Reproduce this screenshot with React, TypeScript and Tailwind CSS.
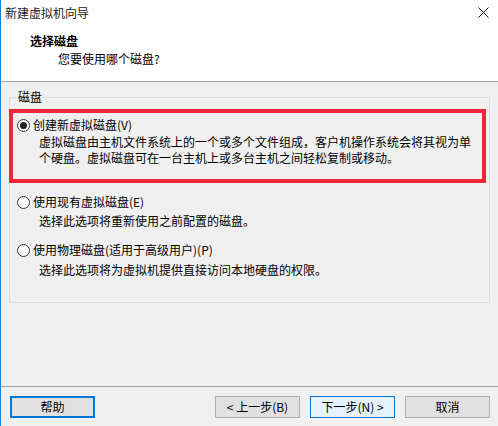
import React from "react";

function Radio({ checked }: { checked?: boolean }) {
  return (
    <span className="flex h-[13px] w-[13px] shrink-0 items-center justify-center rounded-full border border-[#333333] bg-white">
      {checked && <span className="h-[7px] w-[7px] rounded-full bg-[#222222]" />}
    </span>
  );
}

function Btn({ children, variant }: { children: React.ReactNode; variant?: "focus" | "default" }) {
  const cls =
    variant === "focus"
      ? "border-2 border-[#0078d7] bg-[#e1e1e1]"
      : variant === "default"
      ? "border border-[#0078d7] bg-[#e5f1fb]"
      : "border border-[#adadad] bg-[#e1e1e1]";
  return (
    <div className={`flex h-[22px] w-[85px] items-center justify-center text-[12px] leading-[16px] text-black ${cls}`}>
      {children}
    </div>
  );
}

export default function App() {
  return (
    <div className="relative flex h-[426px] w-[498px] flex-col overflow-hidden border-l border-[#1883d7] bg-[#f0f0f0] font-['Noto_Sans_CJK_SC',sans-serif] text-[12px] leading-[16px] text-black">
      {/* header */}
      <div className="flex h-[81px] flex-col bg-white">
        <div className="flex h-[25px] items-center justify-between pl-[4px] pr-[8px]">
          <span className="text-[12px] text-[#1a1a1a]">新建虚拟机向导</span>
          <svg width="11" height="11" viewBox="0 0 11 11" className="mr-[1px]">
            <path d="M0.5 0.5 L10.5 10.5 M10.5 0.5 L0.5 10.5" stroke="#111" strokeWidth="1" fill="none" />
          </svg>
        </div>
        <div className="mt-[8px] pl-[29px] font-bold">选择磁盘</div>
        <div className="mt-[2px] pl-[57px]">您要使用哪个磁盘?</div>
      </div>
      <div className="h-px bg-[#a0a0a0]" />

      {/* body */}
      <div className="flex-1">
        <fieldset className="ml-[8px] mt-[7px] w-[481px] border border-[#dcdcdc] px-0 pb-[24px] pt-[4px]">
          <legend className="ml-[7px] px-[1px] leading-[16px]">磁盘</legend>
          <div className="ml-[-1px] w-[477px] border-4 border-[#ee2838] pb-[13px] pl-[4px] pt-[4px]">
            <div className="flex h-[16px] items-center gap-[3px]">
              <Radio checked />
              <span>创建新虚拟磁盘(V)</span>
            </div>
            <div className="mt-[1px] pl-[22px]">
              <div className="whitespace-nowrap">虚拟磁盘由主机文件系统上的一个或多个文件组成，客户机操作系统会将其视为单</div>
              <div className="whitespace-nowrap">个硬盘。虚拟磁盘可在一台主机上或多台主机之间轻松复制或移动。</div>
            </div>
          </div>

          <div className="mt-[11px] flex h-[16px] items-center gap-[3px] pl-[7px]">
            <Radio />
            <span>使用现有虚拟磁盘(E)</span>
          </div>
          <div className="mt-[3px] pl-[29px]">选择此选项将重新使用之前配置的磁盘。</div>

          <div className="mt-[13px] flex h-[16px] items-center gap-[3px] pl-[7px]">
            <Radio />
            <span>使用物理磁盘(适用于高级用户)(P)</span>
          </div>
          <div className="mt-[4px] pl-[29px]">选择此选项将为虚拟机提供直接访问本地硬盘的权限。</div>
        </fieldset>
      </div>

      <div className="h-px bg-[#a0a0a0]" />

      {/* footer */}
      <div className="flex h-[39px] items-start justify-between pl-[9px] pr-[8px] pt-[9px]">
        <Btn variant="focus">帮助</Btn>
        <div className="flex gap-[10px]">
          <Btn>&lt; 上一步(B)</Btn>
          <Btn variant="default">下一步(N) &gt;</Btn>
          <Btn>取消</Btn>
        </div>
      </div>
    </div>
  );
}
